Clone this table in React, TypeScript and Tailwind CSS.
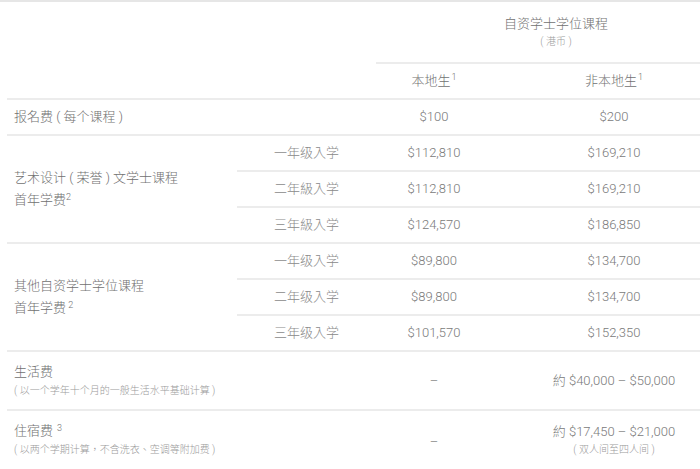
const font = { fontFamily: "Roboto, 'Noto Sans CJK TC', sans-serif" };

type Group = {
  title: string;
  sup: string;
  rows: { label: string; local: string; nonLocal: string }[];
};

const groups: Group[] = [
  {
    title: '艺术设计 ( 荣誉 ) 文学士课程',
    sup: '2',
    rows: [
      { label: '一年级入学', local: '$112,810', nonLocal: '$169,210' },
      { label: '二年級入学', local: '$112,810', nonLocal: '$169,210' },
      { label: '三年級入学', local: '$124,570', nonLocal: '$186,850' },
    ],
  },
  {
    title: '其他自资学士学位课程',
    sup: ' 2',
    rows: [
      { label: '一年级入学', local: '$89,800', nonLocal: '$134,700' },
      { label: '二年级入学', local: '$89,800', nonLocal: '$134,700' },
      { label: '三年级入学', local: '$101,570', nonLocal: '$152,350' },
    ],
  },
];

const line = 'border-b-2 border-[#ececec]';

export default function App() {
  return (
    <div className="w-[700px] h-[469px] overflow-hidden bg-white border-t-2 border-[#e6e6e6]" style={font}>
      <div className="ml-[7px] w-[729px] grid grid-cols-[230px_139px_116px_244px] text-[13px] text-[#717171] font-light">
        {/* header */}
        <div className={`col-span-2 row-span-2 ${line}`} />
        <div className={`col-span-2 h-[62px] flex flex-col items-center justify-center ${line}`}>
          <div className="leading-[20px]">自资学士学位课程</div>
          <div className="text-[10px] text-[#9a9a9a] leading-[16px] whitespace-pre">( 港币 )</div>
        </div>
        <div className={`h-[36px] flex items-center justify-center ${line}`}>
          本地生<sup className="text-[9px] ml-px">1</sup>
        </div>
        <div className={`h-[36px] flex items-center justify-center ${line}`}>
          非本地生<sup className="text-[9px] ml-px">1</sup>
        </div>

        {/* application fee */}
        <div className={`col-span-2 h-[36px] flex items-center pl-[7px] whitespace-pre ${line}`}>报名费 ( 每个课程 )</div>
        <div className={`h-[36px] flex items-center justify-center text-[#7a7a7a] ${line}`}>$100</div>
        <div className={`h-[36px] flex items-center justify-center text-[#7a7a7a] ${line}`}>$200</div>

        {groups.map((g, gi) => (
          <div key={gi} className="contents">
            <div className={`row-span-3 flex flex-col justify-center pl-[7px] leading-[22px] whitespace-pre ${line}`}>
              <div>{g.title}</div>
              <div>
                首年学费<sup className="text-[9px]">{g.sup}</sup>
              </div>
            </div>
            {g.rows.map((r, ri) => (
              <div key={ri} className="contents">
                <div className={`h-[36px] flex items-center justify-center text-[#8a8a8a] ${line}`}>{r.label}</div>
                <div className={`h-[36px] flex items-center justify-center text-[#7a7a7a] ${line}`}>{r.local}</div>
                <div className={`h-[36px] flex items-center justify-center text-[#7a7a7a] ${line}`}>{r.nonLocal}</div>
              </div>
            ))}
          </div>
        ))}

        {/* living cost */}
        <div className={`col-span-2 h-[59px] flex flex-col justify-center pl-[7px] ${line}`}>
          <div className="leading-[20px]">生活费</div>
          <div className="text-[10px] text-[#9a9a9a] leading-[18px] whitespace-pre">( 以一个学年十个月的一般生活水平基础计算 )</div>
        </div>
        <div className={`h-[59px] flex items-center justify-center text-[#7a7a7a] ${line}`}>–</div>
        <div className={`h-[59px] flex items-center justify-center text-[#7a7a7a] ${line}`}>約 $40,000 – $50,000</div>

        {/* accommodation */}
        <div className="col-span-2 h-[58px] flex flex-col justify-center pl-[7px]">
          <div className="leading-[20px]">
            住宿费<sup className="text-[9px] ml-1">3</sup>
          </div>
          <div className="text-[10px] text-[#9a9a9a] leading-[18px] whitespace-pre">( 以两个学期计算，不含洗衣、空调等附加费 )</div>
        </div>
        <div className="h-[58px] flex items-center justify-center text-[#7a7a7a] pt-[3px]">–</div>
        <div className="h-[58px] flex flex-col items-center justify-center text-[#7a7a7a]">
          <div className="leading-[20px]">約 $17,450 – $21,000</div>
          <div className="text-[10px] text-[#9a9a9a] leading-[16px] whitespace-pre">( 双人间至四人间 )</div>
        </div>
      </div>
    </div>
  );
}
